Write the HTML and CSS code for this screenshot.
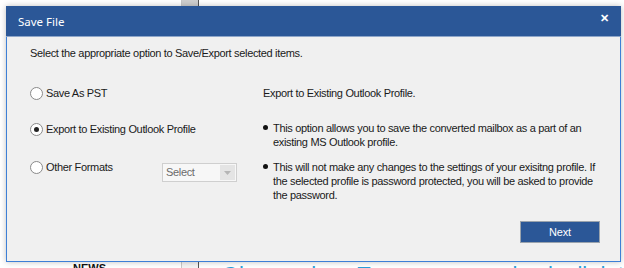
FILE: index.html
```html
<!DOCTYPE html>
<html>
<head>
<meta charset="utf-8">
<link rel="stylesheet" href="styles.css">
</head>
<body>
<div class="desk">
  <div class="side"><span class="news">NEWS</span></div>
  <div class="scroll"></div>
  <div class="main"><span class="headline">Observe how Tomorrow can check all details</span></div>
</div>

<div class="dialog">
  <div class="titlebar">
    <span class="title">Save File</span>
    <span class="close">&#x2715;</span>
  </div>
  <div class="body">
    <p class="intro">Select the appropriate option to Save/Export selected items.</p>
    <div class="grid">
      <label class="opt row1"><span class="radio"></span>Save As PST</label>
      <p class="desc-title row1">Export to Existing Outlook Profile.</p>

      <label class="opt row2"><span class="radio checked"></span>Export to Existing Outlook Profile</label>
      <ul class="bullets row2">
        <li>This option allows you to save the converted mailbox as a part of an existing MS Outlook profile.</li>
      </ul>

      <div class="opt-row row3">
        <label class="opt fixed"><span class="radio"></span>Other Formats</label>
        <div class="select"><span class="sel-text">Select</span><span class="sel-btn"><svg width="7" height="4" viewBox="0 0 7 4"><path d="M0 0h7L3.5 4z" fill="#b5b5b5"/></svg></span></div>
      </div>
      <ul class="bullets row3">
        <li>This will not make any changes to the settings of your exisitng profile. If the selected profile is password protected, you will be asked to provide the password.</li>
      </ul>
    </div>
    <div class="footer">
      <button class="next">Next</button>
    </div>
  </div>
</div>
</body>
</html>
```
FILE: styles.css
```css
html, body {
  margin: 0;
  padding: 0;
}
body {
  width: 624px;
  height: 268px;
  overflow: hidden;
  background: #ffffff;
  position: relative;
  font-family: "Liberation Sans", Arial, sans-serif;
}

/* background page */
.desk {
  display: flex;
  height: 268px;
}
.side {
  width: 181px;
  display: flex;
  align-items: flex-end;
  padding-left: 73px;
  box-sizing: border-box;
}
.news {
  font-size: 11px;
  font-weight: bold;
  color: #111;
  line-height: 1;
  margin-bottom: -6px;
}
.scroll {
  width: 16px;
  border-left: 1px solid #c8c8c8;
  border-right: 1px solid #555;
  background: linear-gradient(#cfcfcf 0 6px, #f4f4f4 6px);
  margin-right: 7px;
}
.main {
  flex: 1;
  display: flex;
  align-items: flex-end;
  padding-left: 16px;
  overflow: hidden;
}
.headline {
  font-size: 22px;
  color: #2a9fd8;
  white-space: nowrap;
  line-height: 1;
  margin-bottom: -18px;
}

/* dialog window */
.dialog {
  position: absolute;
  left: 6px;
  top: 6px;
  width: 615px;
  height: 256px;
  box-sizing: border-box;
  border: 1px solid #3d7fd6;
  border-top: none;
  background: #f0f0f0;
  box-shadow: 0 0 6px rgba(0, 0, 0, 0.25);
  display: flex;
  flex-direction: column;
}
.titlebar {
  height: 30px;
  background: #2b5797;
  margin: 0 -1px;
  display: flex;
  align-items: center;
  justify-content: space-between;
  padding: 0 12px;
  color: #fff;
  border-bottom: 1px solid #8ea6c9;
}
.title {
  font-family: "Noto Sans", "Open Sans", sans-serif;
  font-size: 11.5px;
  margin-top: 1px;
}
.close {
  font-size: 11px;
  font-weight: bold;
  margin-top: -5px;
}

.body {
  flex: 1;
  display: flex;
  flex-direction: column;
  padding: 9px 20px 18px 23px;
  font-size: 11px;
  letter-spacing: -0.33px;
  line-height: 14px;
  color: #1a1a1a;
}
.intro {
  margin: 0;
}
.grid {
  display: grid;
  grid-template-columns: 233px 1fr;
  align-items: start;
  margin-top: 26px;
}
.grid .row1 { margin: 0; }
.grid .row2 { margin: 21px 0 0; }
.grid .row3 { margin: 11px 0 0; }
.grid .opt.row2 { margin-top: 22px; }

.opt {
  display: flex;
  align-items: center;
  gap: 3px;
  height: 14px;
}
.radio {
  width: 11px;
  height: 11px;
  border: 1px solid #8a8a8a;
  border-radius: 50%;
  background: #fff;
  display: flex;
  align-items: center;
  justify-content: center;
}
.radio.checked::after {
  content: "";
  width: 5px;
  height: 5px;
  border-radius: 50%;
  background: #222;
}
.opt-row {
  display: flex;
  align-items: flex-start;
}
.fixed {
  width: 132px;
}
.select {
  margin-top: 3px;
  width: 75px;
  height: 19px;
  box-sizing: border-box;
  border: 1px solid #cfcfcf;
  background: #f7f7f7;
  display: flex;
  align-items: stretch;
}
.sel-text {
  flex: 1;
  color: #6b6b6b;
  padding-left: 3px;
  line-height: 17px;
}
.sel-btn {
  width: 15px;
  margin: 1px;
  background: #e4e4e4;
  display: flex;
  align-items: center;
  justify-content: center;
}
.desc-title {
  margin: 0;
}
.bullets {
  padding: 0;
  list-style: none;
}
.bullets li {
  position: relative;
  padding-left: 10px;
  width: 325px;
}
.bullets li::before {
  content: "";
  position: absolute;
  left: 0;
  top: 4px;
  width: 5px;
  height: 5px;
  border-radius: 50%;
  background: #111;
}

.footer {
  margin-top: auto;
  display: flex;
  justify-content: flex-end;
}
.next {
  width: 80px;
  height: 22px;
  background: #2b5797;
  border: 1px solid #9aa3ad;
  color: #fff;
  font-family: "Liberation Sans", Arial, sans-serif;
  font-size: 11px;
  letter-spacing: -0.2px;
  padding: 0;
}
```
